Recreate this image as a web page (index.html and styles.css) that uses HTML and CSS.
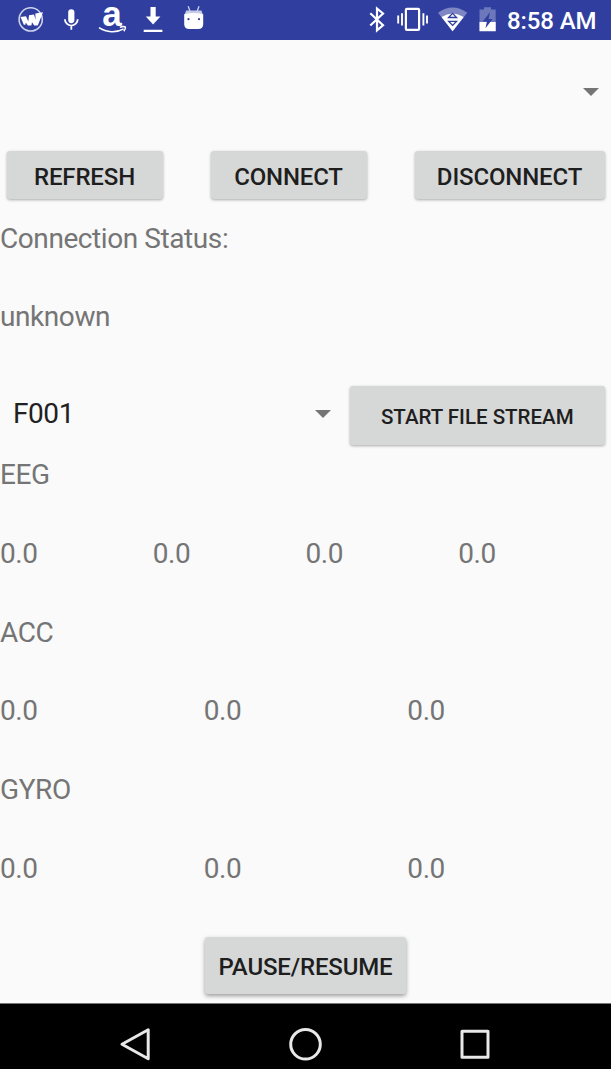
FILE: index.html
```html
<!DOCTYPE html>
<html lang="en">
<head>
<meta charset="utf-8">
<title>Sensor Monitor</title>
<link rel="stylesheet" href="styles.css">
</head>
<body>
<div class="screen">
  <header class="status-bar">
    <svg class="notifications" width="220" height="40" viewBox="0 0 220 40" fill="#fff">
      <circle cx="30.7" cy="19.4" r="11.6" fill="none" stroke="#cdd2ec" stroke-width="1.6"/>
      <path d="M20.500 17l5.500-.8 2.300 5.300.7-6.300 5-.6 1.600 5.200-.3-6.200 7.700-1.400-5.200 13.300h-3.600l-2.200-3.200-.6 3.200h-3.600l-2-3-.4 2.300h-1.600z"/>
      <rect x="68.200" y="9.200" width="6.200" height="14" rx="3.100"/>
      <path d="M64.900 19.200a6.400 6.400 0 0 0 12.800 0M71.300 25.500v4.200" fill="none" stroke="#fff" stroke-width="1.800"/>
      <text class="store-letter" x="102.300" y="26.400">a</text>
      <path d="M99 27.600c7.600 5 17.400 5.400 24.600 1.200M119.800 27.200c3-.8 4.800-.8 5.300-.3s0 2.500-1.300 4.300" fill="none" stroke="#fff" stroke-width="1.500"/>
      <path d="M150.500 7h5.200v9.600h4.700l-7.300 8-7.300-8h4.700zM143.700 29.700h18.700v2.300h-18.700z"/>
      <path d="M188.200 6.300l1.800 5M199 6.300l-1.800 5" fill="none" stroke="#cdd2ec" stroke-width="1.300"/>
      <path d="M186.200 10.500h15.200l1.600 4.500h-18.600z" fill="#c6cce8"/>
      <path d="M184.200 14.200q9.500-2.600 19 0v9.800q0 5-5 5h-9q-5 0-5-5z"/>
      <circle cx="188.500" cy="19.200" r="1.100" fill="#303f9f"/><circle cx="199" cy="19.200" r="1.100" fill="#303f9f"/>
    </svg>
    <div class="system">
      <svg width="135" height="40" viewBox="365 0 135 40" fill="#fff">
        <path d="M370.300 13.300l12.700 12-6 5V8.500l6 5-12.700 12" fill="none" stroke="#fff" stroke-width="2.200"/>
        <path d="M398.200 15.600v8M402 13.200v12.400M423.400 13.200v12.400M427 15.600v8" fill="none" stroke="#fff" stroke-width="1.900"/>
        <rect x="405.900" y="8.900" width="13.200" height="21" rx="1" fill="none" stroke="#fff" stroke-width="2.200"/>
        <path d="M438 12.700q14.600-10.300 29.200 0L452.600 31.200z" fill="#7e87c4"/>
        <path d="M441.500 17q11-7.200 22.200 0L452.600 31.200z"/>
        <path d="M448.600 17.500l4-4.100 4 4.100zM448.600 21.300l4 4.100 4-4.100z" fill="#fff" stroke="#303f9f" stroke-width="1.300"/>
        <path d="M484 7.200h7v2.300h4.700v21.700h-16.200V9.500h4.500z" fill="#6d77bb"/>
        <path d="M479.500 22h16.200v9.200h-16.200z"/>
        <path d="M490 12.200l-7.300 9.300h4.200l-1.400 6.700 7.100-9.200h-4z" fill="#303f9f"/>
      </svg>
      <span class="clock">8:58 AM</span>
    </div>
  </header>

  <main class="content">
    <div class="device-spinner"><span class="caret"></span></div>
    <div class="actions">
      <button class="btn">REFRESH</button>
      <button class="btn">CONNECT</button>
      <button class="btn btn-wide">DISCONNECT</button>
    </div>
    <div class="row label">Connection Status:</div>
    <div class="row">unknown</div>
    <div class="file-row">
      <div class="file-spinner"><span>F001</span><span class="caret"></span></div>
      <button class="btn btn-small">START FILE STREAM</button>
    </div>
    <div class="row label">EEG</div>
    <div class="row values"><span>0.0</span><span>0.0</span><span>0.0</span><span>0.0</span></div>
    <div class="row label">ACC</div>
    <div class="row values"><span>0.0</span><span>0.0</span><span>0.0</span></div>
    <div class="row label">GYRO</div>
    <div class="row values"><span>0.0</span><span>0.0</span><span>0.0</span></div>
    <div class="footer"><button class="btn btn-raised">PAUSE/RESUME</button></div>
  </main>

  <nav class="nav-bar">
    <svg width="611" height="65" viewBox="0 1004 611 65" fill="none" stroke="#e8e8e8" stroke-width="3" stroke-linejoin="round">
      <path d="M148.200 1029.800v29L122 1044.300z"/>
      <circle cx="305.500" cy="1044.300" r="14.800"/>
      <rect x="462" y="1031.300" width="26" height="26"/>
    </svg>
  </nav>
</div>
</body>
</html>
```
FILE: styles.css
```css
* { box-sizing: border-box; }
body {
  margin: 0;
  font-family: Roboto, "Liberation Sans", sans-serif;
  background: #fafafa;
}
svg { display: block; }
.screen {
  width: 611px;
  height: 1069px;
  display: flex;
  flex-direction: column;
  overflow: hidden;
}
.status-bar {
  height: 39.7px;
  flex: none;
  display: flex;
  justify-content: space-between;
  background: #303f9f;
}
.notifications { overflow: visible; }
.store-letter {
  font: bold 35px "Liberation Sans", sans-serif;
}
.system {
  display: flex;
  width: 246px;
}
.clock {
  padding-left: 7px;
  color: #fff;
  font-size: 24px;
  font-weight: 500;
  line-height: 42px;
  letter-spacing: -.1px;
  white-space: nowrap;
}
.content {
  flex: 1;
  color: #757575;
  font-size: 28px;
  letter-spacing: -.42px;
  line-height: 32px;
}
.device-spinner {
  height: 104.8px;
  display: flex;
  align-items: center;
  justify-content: flex-end;
  padding-right: 12px;
}
.caret {
  width: 0;
  height: 0;
  border: 8px solid transparent;
  border-top-color: #757575;
  border-bottom: 0;
}
.actions {
  height: 78.200px;
  display: flex;
  justify-content: space-between;
  align-items: flex-start;
  padding: 6.500px 6.500px 0 6.500px;
}
.btn {
  width: 156px;
  height: 48.500px;
  padding: 4px 0 0;
  border: 0;
  border-radius: 3px;
  background: #d6d7d7;
  box-shadow: 0 1px 3px rgba(0, 0, 0, .32);
  color: #1e1e1e;
  font: 500 24px/28px Roboto, "Liberation Sans", sans-serif;
  letter-spacing: -.15px;
  white-space: nowrap;
}
.btn-wide { width: 190px; }
.btn-small {
  width: 254.500px;
  height: 59px;
  padding-top: 3px;
  font-size: 20.500px;
  letter-spacing: 0;
}
.btn-raised {
  width: 201.500px;
  height: 57px;
  padding-top: 3px;
  box-shadow: 0 2px 4px rgba(0, 0, 0, .38);
}
.row { height: 78.800px; }
.file-row {
  height: 78.800px;
  display: flex;
  justify-content: space-between;
  padding: 5.400px 6.500px 0 13px;
}
.file-spinner {
  width: 318px;
  height: 56px;
  display: flex;
  justify-content: space-between;
  align-items: center;
  color: #212121;
}
.values { display: flex; }
.values span { flex: 1; }
.footer {
  display: flex;
  justify-content: center;
  padding-top: 5px;
}
.nav-bar {
  height: 66px;
  flex: none;
  background: #000;
  border-top: 1px solid #777;
}
```
